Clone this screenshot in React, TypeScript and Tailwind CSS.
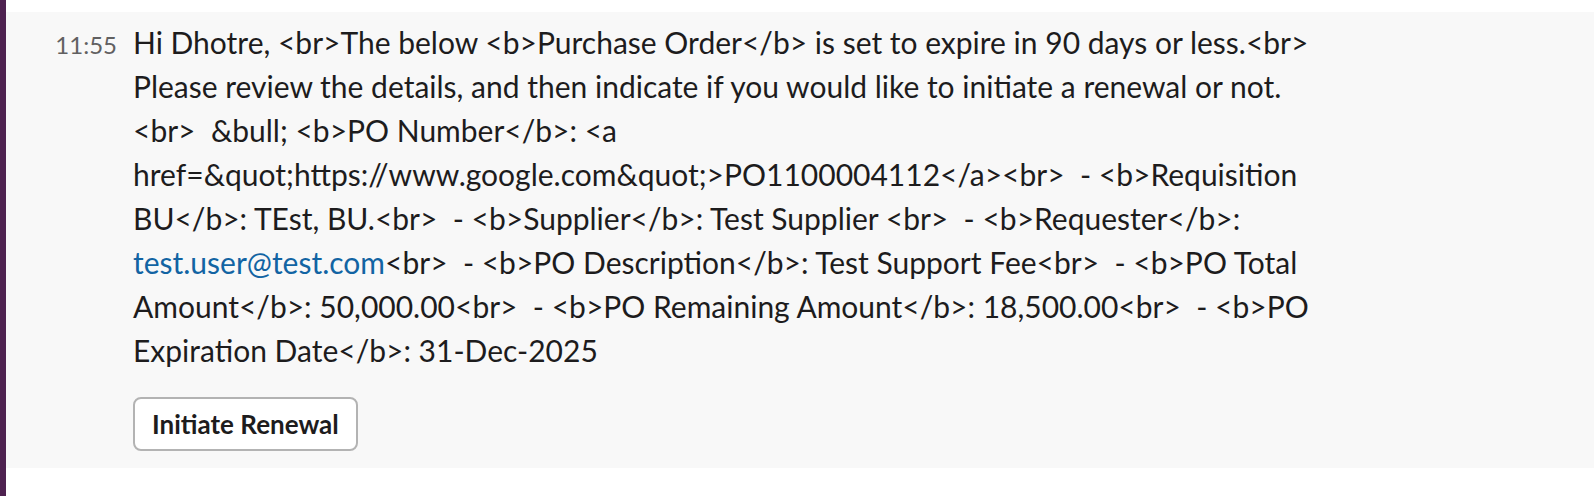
export default function App() {
  const font = { fontFamily: "Lato, 'Noto Sans', sans-serif" };
  return (
    <div className="w-full h-[496px] bg-white flex" style={font}>
      <div className="w-[6px] self-stretch bg-[#4e2250]" />
      <div className="flex-1 pt-[12px]">
        <div className="bg-[#f8f8f8] h-[456px] pt-[8px] flex items-baseline">
          <div className="w-[127px] shrink-0 pr-[16px] text-right text-[24px] leading-[44px] text-[#616061]">
            11:55
          </div>
          <div className="w-[1190px]">
            <div className="text-[30px] leading-[44px] text-[#1d1c1d] whitespace-pre-wrap break-words">
              {"Hi Dhotre, <br>The below <b>Purchase Order</b> is set to expire in 90 days or less.<br> Please review the details, and then indicate if you would like to initiate a renewal or not. <br>  &bull; <b>PO Number</b>: <a href=&quot;https://www.google.com&quot;>PO1100004112</a><br>  - <b>Requisition BU</b>: TEst, BU.<br>  - <b>Supplier</b>: Test Supplier <br>  - <b>Requester</b>: "}
              <span className="text-[#1264a3]">test.user@test.com</span>
              {"<br>  - <b>PO Description</b>: Test Support Fee<br>  - <b>PO Total Amount</b>: 50,000.00<br>  - <b>PO Remaining Amount</b>: 18,500.00<br>  - <b>PO Expiration Date</b>: 31-Dec-2025"}
            </div>
            <div className="mt-[25px]">
              <button className="h-[54px] px-[17px] rounded-[8px] border-2 border-[#b3b3b3] bg-white text-[26px] font-bold text-[#1d1c1d] leading-none">
                Initiate Renewal
              </button>
            </div>
          </div>
        </div>
      </div>
    </div>
  );
}
